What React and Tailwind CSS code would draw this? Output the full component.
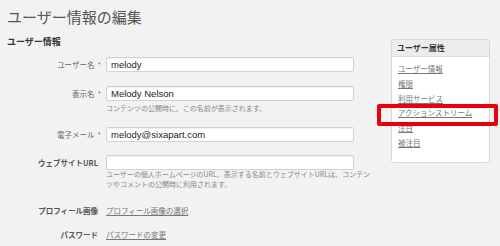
const jp = { fontFamily: '"Noto Sans CJK JP", "Noto Sans", sans-serif' }

function Field({ label, required, bold, value, help }) {
  return (
    <div>
      <div className="flex items-center">
        <div className={`w-[94px] text-right text-[7.5px] leading-[15px] ${bold ? "font-bold text-[#555] pr-[3px]" : "text-[#666]"}`}>
          {label}
          {required && <span className="ml-[3px] text-[#777]">*</span>}
        </div>
        <div className="ml-[5px] w-[248px] h-[15px] bg-white border border-[#d2d2d2] rounded-[2px] shadow-[inset_0_1px_1px_rgba(0,0,0,0.06)] flex items-center pl-[4px]">
          <span
            className="text-[9.5px] text-[#222] leading-none"
            style={{ fontFamily: '"Liberation Sans", Arial, sans-serif' }}
          >
            {value}
          </span>
        </div>
      </div>
      {help}
    </div>
  )
}

export default function App() {
  const links = ["ユーザー情報", "権限", "利用サービス", "アクションストリーム", "注目", "被注目"]

  return (
    <div className="w-[500px] h-[246px] bg-[#f2f2f2] overflow-hidden relative" style={jp}>
      <h1 className="pl-[7px] pt-[7px] text-[15px] leading-[20px] text-[#555] font-normal">ユーザー情報の編集</h1>

      <div className="flex items-start mt-[9px]">
        {/* main form */}
        <div className="pl-[7px] w-[370px]">
          <h2 className="text-[9px] leading-[12px] font-bold text-[#333]">ユーザー情報</h2>

          <div className="mt-[9px]">
            <Field label="ユーザー名" required value="melody" />
          </div>

          <div className="mt-[14px]">
            <Field
              label="表示名"
              required
              value="Melody Nelson"
              help={
                <p className="ml-[99px] mt-[2px] text-[7px] leading-[10px] text-[#888]">
                  コンテンツの公開時に、この名前が表示されます。
                </p>
              }
            />
          </div>

          <div className="mt-[14px]">
            <Field label="電子メール" required value="melody@sixapart.com" />
          </div>

          <div className="mt-[13px]">
            <Field
              label="ウェブサイトURL"
              bold
              value=""
              help={
                <p className="ml-[99px] -mt-[1px] w-[268px] text-[7px] leading-[10px] text-[#888]">
                  ユーザーの個人ホームページのURL。表示する名前とウェブサイトURLは、コンテンツやコメントの公開時に利用されます。
                </p>
              }
            />
          </div>

          <div className="flex items-center mt-[16px] text-[7.5px] leading-[12px]">
            <div className="w-[94px] text-right pr-[3px] font-bold text-[#555]">プロフィール画像</div>
            <a className="ml-[5px] text-[#777] underline">プロフィール画像の選択</a>
          </div>

          <div className="flex items-center mt-[12px] text-[7.5px] leading-[12px]">
            <div className="w-[94px] text-right pr-[3px] font-bold text-[#555]">パスワード</div>
            <a className="ml-[5px] text-[#777] underline">パスワードの変更</a>
          </div>
        </div>

        {/* sidebar */}
        <div className="ml-auto mr-[10px] mt-[3px] w-[99px] bg-white border border-[#d8d8d8] rounded-[3px] overflow-hidden">
          <div className="h-[17px] bg-[#ececec] border-b border-[#dcdcdc] pl-[5px] flex items-center text-[8px] font-bold text-[#333]">
            ユーザー属性
          </div>
          <ul className="pl-[6px] pt-[5px] pb-[11px] text-[7.5px] leading-[14.8px] text-[#777]">
            {links.map((l) => (
              <li key={l}>
                <a className="underline">{l}</a>
              </li>
            ))}
          </ul>
        </div>
      </div>

      {/* annotation */}
      <div className="absolute left-[377px] top-[104px] w-[121px] h-[22px] border-[4px] border-[#e8000b] rounded-[2px]" />
    </div>
  )
}
